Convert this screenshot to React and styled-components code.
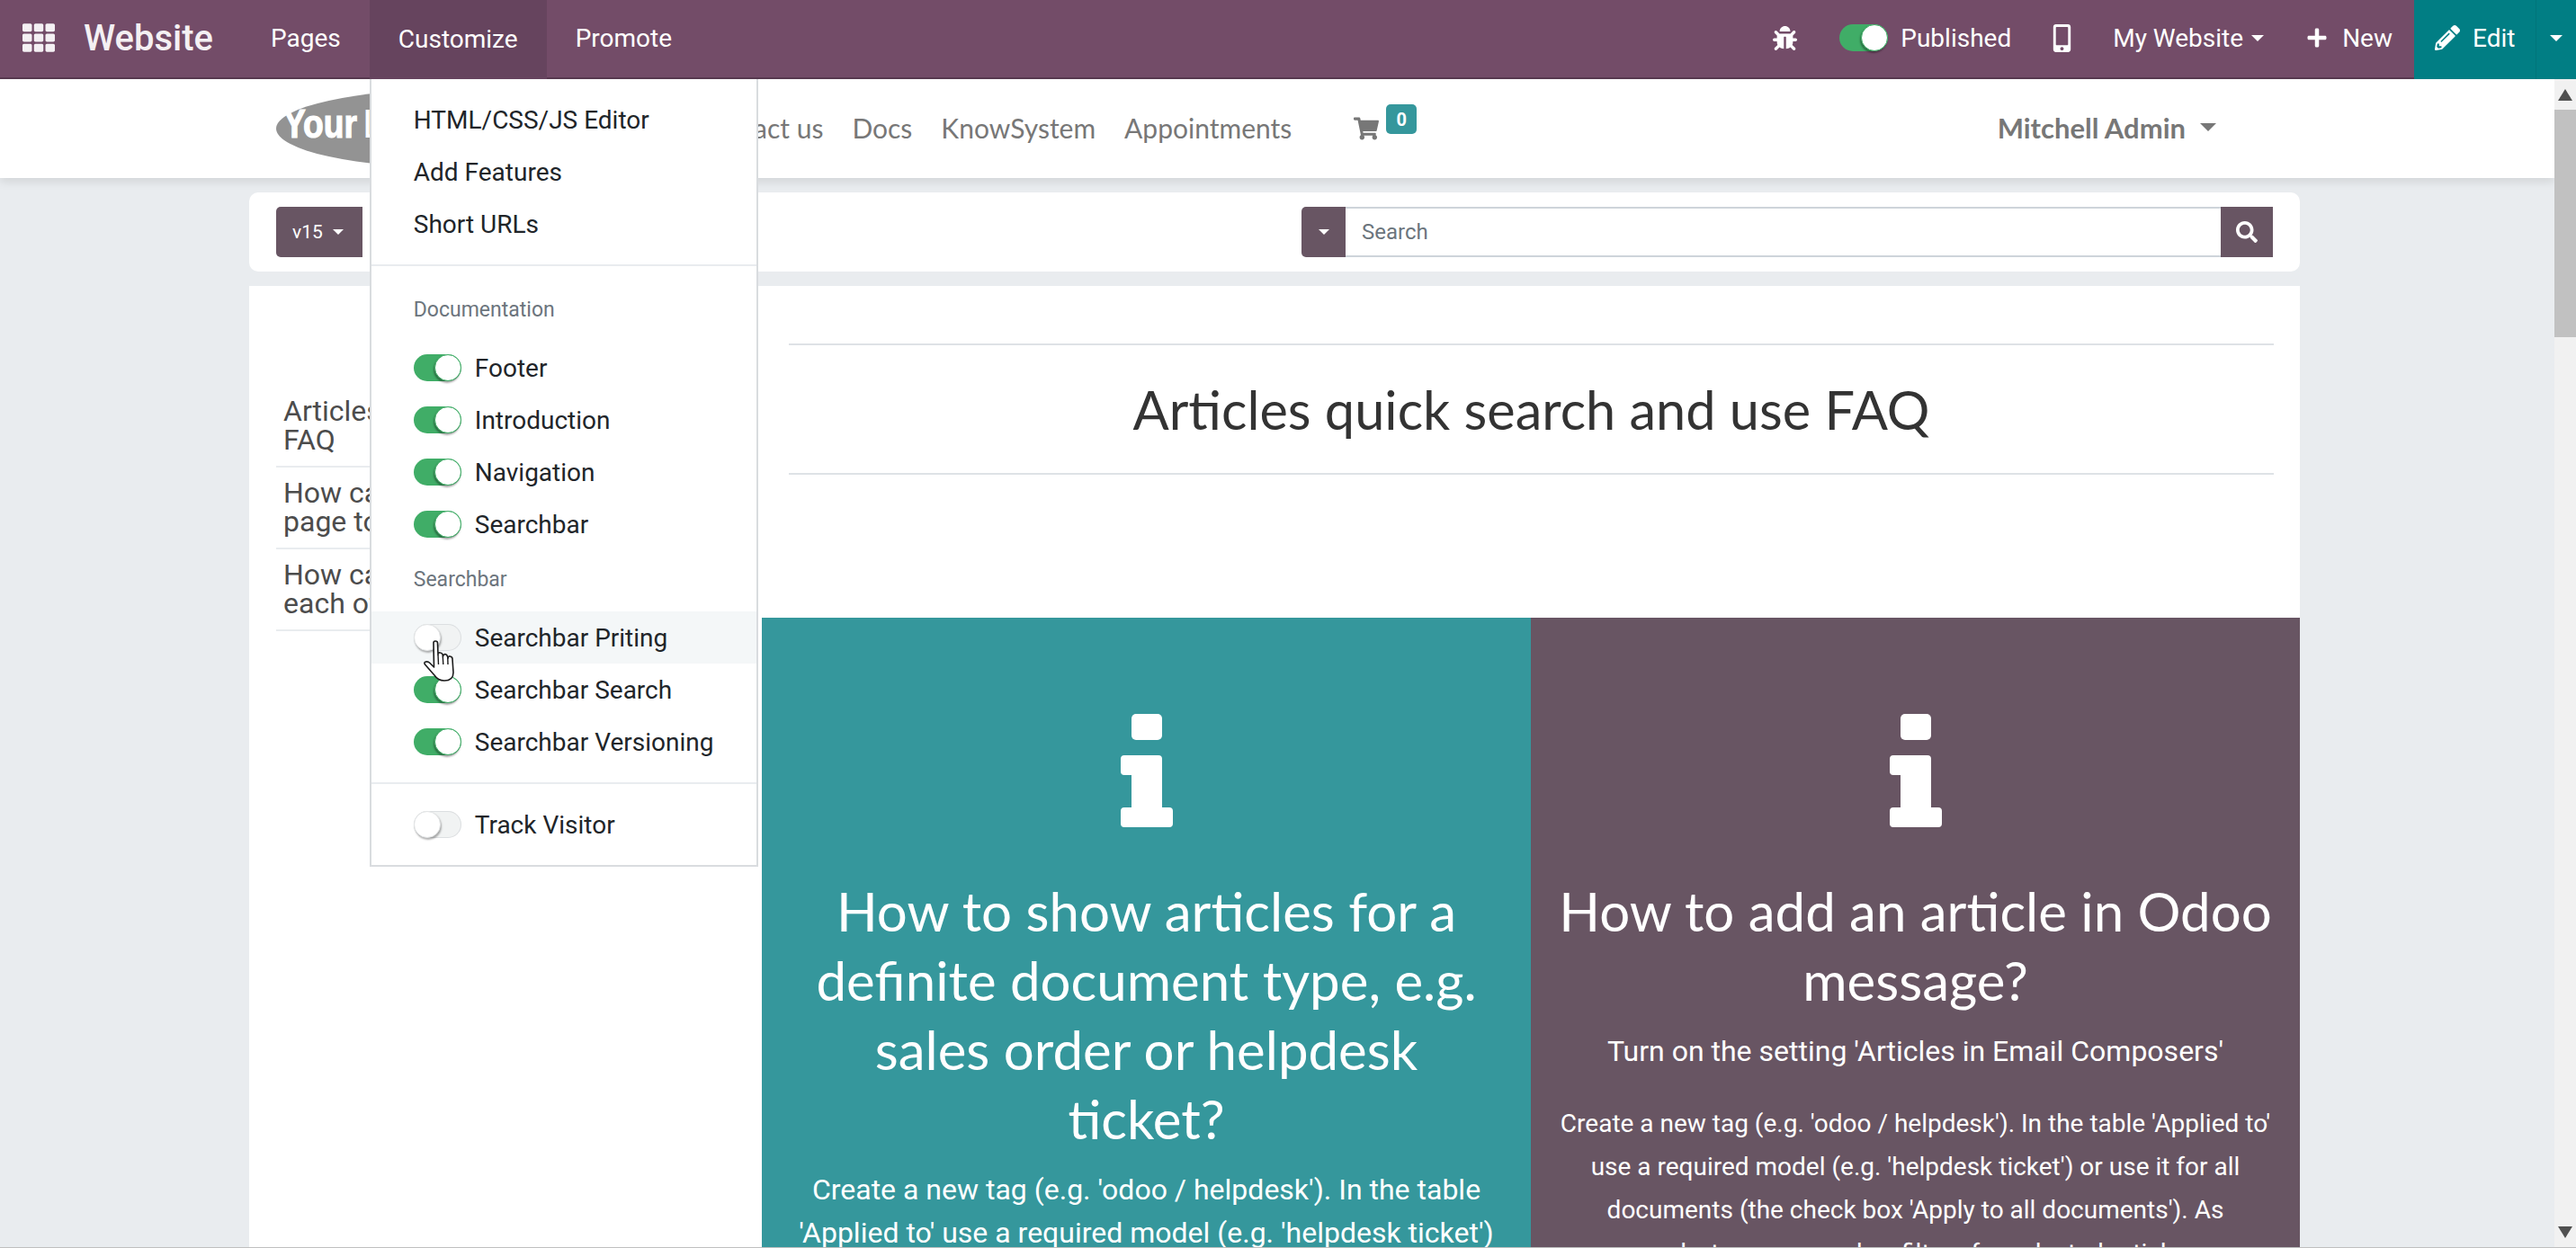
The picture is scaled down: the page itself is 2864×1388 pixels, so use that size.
import React from "react"
import styled, { createGlobalStyle } from "styled-components"
import { FaBug, FaMobileAlt, FaPlus, FaPencilAlt, FaSearch, FaShoppingCart, FaTh } from "react-icons/fa"

const GlobalStyle = createGlobalStyle`
  html, body { margin: 0; padding: 0; height: 100%; overflow: hidden; }
  body { font-family: Roboto, sans-serif; }
  * { box-sizing: border-box; }
`
const HEADING_FONT = `Lato, "Noto Sans", sans-serif`

const Page = styled.div`
  height: 100vh;
  display: flex;
  flex-direction: column;
  overflow: hidden;
  border-bottom: 1px solid rgba(0, 0, 0, 0.25);
`
const NavBar = styled.header`
  flex: none;
  height: 88px;
  display: flex;
  align-items: stretch;
  background: #734c68;
  border-bottom: 2px solid #57394f;
  color: #fff;
  position: relative;
  z-index: 10;
`
const AppIcon = styled.div`
  width: 93px;
  display: flex;
  align-items: center;
  padding: 0 0 2px 25px;
  font-size: 36px;
  color: #f4f0f3;
`
const Brand = styled.div`
  width: 176px;
  display: flex;
  align-items: center;
  padding-bottom: 2px;
  font-size: 40px;
  font-weight: 500;
  color: #f4f0f3;
`
const NavItem = styled.div`
  position: relative;
  display: flex;
  align-items: center;
  padding: 0 32px 2px;
  font-size: 28px;
  background: ${(p) => (p.$active ? "#66445e" : "transparent")};
  margin-bottom: ${(p) => (p.$active ? "-2px" : "0")};
`
const Spacer = styled.div`
  flex: 1;
`
const RightGroup = styled.div`
  display: flex;
  align-items: center;
  padding-bottom: 2px;
  font-size: 28px;
`
const Caret = styled.span`
  display: inline-block;
  width: 0;
  height: 0;
  border-left: ${(p) => p.$size || 7}px solid transparent;
  border-right: ${(p) => p.$size || 7}px solid transparent;
  border-top: ${(p) => p.$size || 7}px solid ${(p) => p.$color || "#fff"};
  margin-left: ${(p) => p.$gap ?? 9}px;
`
const BugSlot = styled.div`
  display: flex;
  font-size: 27px;
  margin-right: 47px;
`
const SwitchLabel = styled.div`
  display: flex;
  align-items: center;
  gap: 14px;
  margin-right: 41px;
`
const MobileSlot = styled.div`
  display: flex;
  font-size: 31px;
  margin-right: 41px;
`
const PlainItem = styled.div`
  display: flex;
  align-items: center;
  margin-right: ${(p) => p.$mr || 0}px;
`
const PlusIcon = styled(FaPlus)`
  font-size: 24px;
  margin-right: 16px;
`
const EditBlock = styled.div`
  width: 180px;
  margin-left: 24px;
  margin-bottom: -2px;
  display: flex;
  background: #017e84;
  font-size: 28px;
`
const EditMain = styled.div`
  width: 135px;
  display: flex;
  align-items: center;
  gap: 14px;
  padding: 0 0 4px 23px;
`
const EditCaret = styled.div`
  flex: 1;
  display: flex;
  align-items: center;
  justify-content: center;
  padding-bottom: 4px;
  border-left: 1px solid #01757a;
`

/* customize dropdown */
const Menu = styled.div`
  position: absolute;
  top: 100%;
  left: 0;
  width: 432px;
  background: #fff;
  border: 2px solid #d9dcdf;
  border-top: 0;
  padding: 17px 0 16px;
  color: #212529;
  z-index: 20;
`
const MenuLink = styled.div`
  height: 58px;
  line-height: 58px;
  padding-left: 47px;
  font-size: 28px;
`
const MenuDivider = styled.div`
  height: 2px;
  background: #e9ecef;
  margin: ${(p) => p.$top ?? 16}px 0 16px;
`
const MenuHeader = styled.div`
  height: 58px;
  line-height: 58px;
  margin: ${(p) => p.$top ?? 4}px 0 6px;
  padding-left: 47px;
  font-size: 23px;
  color: #6c757d;
`
const ToggleRow = styled.div`
  position: relative;
  height: 58px;
  display: flex;
  align-items: center;
  gap: 15px;
  padding-left: 47px;
  font-size: 28px;
  background: ${(p) => (p.$hover ? "#f4f7f8" : "transparent")};
`
const Track = styled.span`
  flex: none;
  position: relative;
  display: inline-block;
  width: ${(p) => p.$w || 53}px;
  height: 30px;
  border-radius: 15px;
  background: ${(p) => (p.$on ? "#40ad67" : "#f1f3f3")};
  box-shadow: ${(p) => (p.$on ? "none" : "inset 0 0 0 1px #dcdfe1")};
`
const Knob = styled.span`
  position: absolute;
  top: 0;
  ${(p) => (p.$on ? "right: 0;" : "left: 0;")}
  width: 30px;
  height: 30px;
  border-radius: 50%;
  background: #fff;
  border: 1px solid ${(p) => (p.$on ? "#40ad67" : "#e3e5e6")};
  box-shadow: ${(p) => (p.$on ? "-1px 2px 2px rgba(0,0,0,.35)" : "1px 2px 2px rgba(0,0,0,.3)")};
`
const HandCursor = styled.svg`
  position: absolute;
  left: 58px;
  top: 32px;
  width: 34px;
  height: 46px;
  z-index: 2;
`

/* page */
const Body = styled.div`
  flex: 1;
  min-height: 0;
  display: flex;
`
const Main = styled.main`
  flex: 1;
  min-width: 0;
  overflow: hidden;
  background: #e9ecef;
`
const Scrollbar = styled.div`
  flex: none;
  width: 24px;
  display: flex;
  flex-direction: column;
  background: #f1f1f1;
`
const ScrollArrow = styled.div`
  flex: none;
  height: 34px;
  display: flex;
  align-items: center;
  justify-content: center;
`
const ArrowUp = styled.span`
  width: 0;
  height: 0;
  border-left: 8px solid transparent;
  border-right: 8px solid transparent;
  border-bottom: 13px solid #505050;
`
const ArrowDown = styled.span`
  width: 0;
  height: 0;
  border-left: 8px solid transparent;
  border-right: 8px solid transparent;
  border-top: 13px solid #505050;
`
const ScrollThumb = styled.div`
  flex: none;
  height: 253px;
  background: #c1c1c1;
`
const ScrollRest = styled.div`
  flex: 1;
`
const SiteHeader = styled.div`
  height: 110px;
  display: flex;
  align-items: center;
  background: #fff;
  box-shadow: 0 4px 10px rgba(0, 0, 0, 0.1);
  padding-left: 307px;
  position: relative;
`
const Logo = styled.svg`
  flex: none;
  width: 240px;
  height: 80px;
`
const SiteNav = styled.nav`
  display: flex;
  align-items: center;
  gap: 32px;
  font-family: ${HEADING_FONT};
  font-size: 30px;
  color: #777;
  margin: -3px 0 0 227px;
`
const SiteLink = styled.span`
  white-space: nowrap;
`
const CartLink = styled.span`
  position: relative;
  display: flex;
  align-items: center;
  font-size: 28px;
  color: #777;
  margin-left: 69px;
`
const CartBadge = styled.span`
  position: absolute;
  left: 36px;
  top: -13px;
  width: 34px;
  height: 33px;
  border-radius: 5px;
  background: #35979c;
  color: #fff;
  font-family: Roboto, sans-serif;
  font-size: 20px;
  font-weight: 700;
  display: flex;
  align-items: center;
  justify-content: center;
`
const UserMenu = styled.div`
  position: absolute;
  right: 376px;
  top: -3px;
  bottom: 0;
  display: flex;
  align-items: center;
  font-family: ${HEADING_FONT};
  font-size: 31px;
  font-weight: 700;
  color: #777;
`
const Wrapper = styled.div`
  width: 2280px;
  margin-left: 277px;
`
const SearchCard = styled.div`
  margin-top: 16px;
  height: 88px;
  display: flex;
  align-items: center;
  justify-content: space-between;
  padding: 0 30px;
  background: #fff;
  border-radius: 10px;
`
const VersionButton = styled.div`
  width: 96px;
  height: 56px;
  display: flex;
  align-items: center;
  padding-left: 18px;
  border-radius: 5px 0 0 5px;
  background: #685563;
  color: #fff;
  font-size: 21px;
`
const SearchGroup = styled.div`
  width: 1080px;
  height: 56px;
  display: flex;
`
const FilterButton = styled.div`
  flex: none;
  width: 49px;
  display: flex;
  align-items: center;
  justify-content: center;
  background: #685563;
  border-radius: 5px 0 0 5px;
`
const SearchInput = styled.div`
  flex: 1;
  display: flex;
  align-items: center;
  padding-left: 18px;
  border: 2px solid #ced4da;
  border-left: 0;
  border-right: 0;
  font-size: 24px;
  color: #6c757d;
`
const SearchButton = styled.div`
  flex: none;
  width: 58px;
  display: flex;
  align-items: center;
  justify-content: center;
  background: #685563;
  color: #fff;
  font-size: 24px;
`
const ArticleCard = styled.div`
  margin-top: 16px;
  display: grid;
  grid-template-columns: 570px 1710px;
  background: #fff;
`
const Sidebar = styled.aside`
  padding: 111px 40px 0 30px;
`
const SideRow = styled.div`
  padding: 12px 8px 13px;
  font-size: 32px;
  line-height: 32px;
  color: #4c4c4c;
  border-bottom: 2px solid #e9ecef;
`
const Content = styled.div`
  padding-top: 64px;
`
const TitleBlock = styled.h1`
  margin: 0 29px 159px 30px;
  height: 146px;
  display: flex;
  align-items: center;
  justify-content: center;
  border-top: 2px solid #dee2e6;
  border-bottom: 2px solid #dee2e6;
  font-family: ${HEADING_FONT};
  font-size: 59.5px;
  font-weight: 400;
  color: #333;
`
const CardGrid = styled.div`
  display: grid;
  grid-template-columns: 855px 855px;
`
const InfoCard = styled.section`
  height: 900px;
  padding: 107px 30px 0;
  background: ${(p) => p.$bg};
  color: #fff;
  text-align: center;
`
const InfoIcon = styled.svg`
  display: block;
  width: 58px;
  height: 126px;
  margin: 0 auto 55px;
`
const CardTitle = styled.h2`
  margin: 0 0 16px;
  font-family: ${HEADING_FONT};
  font-size: 60px;
  line-height: 77px;
  font-weight: 400;
`
const CardSub = styled.p`
  margin: 0 0 33px;
  font-size: 32px;
  line-height: 48px;
`
const CardText = styled.p`
  margin: 0;
  font-size: 28px;
  line-height: 48px;
`

const Toggle = ({ on, w }) => (
  <Track $on={on} $w={w}>
    <Knob $on={on} />
  </Track>
)

const Info = () => (
  <InfoIcon viewBox="0 0 58 126">
    <rect x="12" y="0" width="34" height="29" rx="5" fill="#fff" />
    <path
      d="M4 46H42Q46 46 46 50V104H54Q58 104 58 108V122Q58 126 54 126H4Q0 126 0 122V108Q0 104 4 104H12V68H4Q0 68 0 64V50Q0 46 4 46Z"
      fill="#fff"
    />
  </InfoIcon>
)

const Hand = () => (
  <HandCursor viewBox="0 0 34 46">
    <path
      d="M11 3Q11 1 13 1Q15.5 1 15.5 3L16 16Q16 13.5 18.5 14Q20.5 14 21 16L21.5 18Q22 15.5 24 15.5Q26 16 26.5 18L27 20Q27.5 17.5 29.5 18Q32 18.5 32 21L33 36Q33 45 23 45Q16 45 12 39L1.5 27Q0 24.5 2.5 24Q5 23.5 7 25.5L11.5 30Z"
      fill="#fff"
      stroke="#1c1c1c"
      strokeWidth="1.6"
      strokeLinejoin="round"
    />
    <path d="M16 16L16.5 27M21.3 18L21.8 27M26.8 20L27 27" stroke="#1c1c1c" strokeWidth="1.4" fill="none" />
  </HandCursor>
)

export default function App() {
  return (
    <Page>
      <GlobalStyle />
      <NavBar>
        <AppIcon>
          <FaTh />
        </AppIcon>
        <Brand>Website</Brand>
        <NavItem>Pages</NavItem>
        <NavItem $active>
          Customize
          <Menu>
            <MenuLink>HTML/CSS/JS Editor</MenuLink>
            <MenuLink>Add Features</MenuLink>
            <MenuLink>Short URLs</MenuLink>
            <MenuDivider $top={15} />
            <MenuHeader $top={20}>Documentation</MenuHeader>
            <ToggleRow><Toggle on />Footer</ToggleRow>
            <ToggleRow><Toggle on />Introduction</ToggleRow>
            <ToggleRow><Toggle on />Navigation</ToggleRow>
            <ToggleRow><Toggle on />Searchbar</ToggleRow>
            <MenuHeader>Searchbar</MenuHeader>
            <ToggleRow $hover>
              <Toggle />
              Searchbar Priting
              <Hand />
            </ToggleRow>
            <ToggleRow><Toggle on />Searchbar Search</ToggleRow>
            <ToggleRow><Toggle on />Searchbar Versioning</ToggleRow>
            <MenuDivider />
            <ToggleRow><Toggle />Track Visitor</ToggleRow>
          </Menu>
        </NavItem>
        <NavItem>Promote</NavItem>
        <Spacer />
        <RightGroup>
          <BugSlot><FaBug /></BugSlot>
          <SwitchLabel>
            <Toggle on w={54} />
            Published
          </SwitchLabel>
          <MobileSlot><FaMobileAlt /></MobileSlot>
          <PlainItem $mr={47}>
            My Website
            <Caret />
          </PlainItem>
          <PlainItem>
            <PlusIcon />
            New
          </PlainItem>
        </RightGroup>
        <EditBlock>
          <EditMain>
            <FaPencilAlt />
            Edit
          </EditMain>
          <EditCaret><Caret $gap={0} /></EditCaret>
        </EditBlock>
      </NavBar>
      <Body>
        <Main>
          <SiteHeader>
            <Logo viewBox="0 0 240 80">
              <ellipse cx="200" cy="40" rx="200" ry="44" fill="#939393" />
              <text
                x="8"
                y="50"
                fontFamily="Liberation Sans, sans-serif"
                fontWeight="700"
                fontSize="44"
                fill="#fff"
                stroke="#fff"
                strokeWidth="1.2"
                textLength="82"
                lengthAdjust="spacingAndGlyphs"
              >
                Your
              </text>
              <text x="96" y="50" fontFamily="Liberation Sans, sans-serif" fontSize="44" fill="#fff">Logo</text>
            </Logo>
            <SiteNav>
              <SiteLink>Contact us</SiteLink>
              <SiteLink>Docs</SiteLink>
              <SiteLink>KnowSystem</SiteLink>
              <SiteLink>Appointments</SiteLink>
            </SiteNav>
            <CartLink>
              <FaShoppingCart />
              <CartBadge>0</CartBadge>
            </CartLink>
            <UserMenu>
              Mitchell Admin
              <Caret $size={9} $color="#777" $gap={16} />
            </UserMenu>
          </SiteHeader>
          <Wrapper>
            <SearchCard>
              <VersionButton>
                v15
                <Caret $size={6} $gap={11} />
              </VersionButton>
              <SearchGroup>
                <FilterButton><Caret $size={6} $gap={0} /></FilterButton>
                <SearchInput>Search</SearchInput>
                <SearchButton><FaSearch /></SearchButton>
              </SearchGroup>
            </SearchCard>
            <ArticleCard>
              <Sidebar>
                <SideRow>Articles<br />FAQ</SideRow>
                <SideRow>How can<br />page to</SideRow>
                <SideRow>How can<br />each of</SideRow>
              </Sidebar>
              <Content>
                <TitleBlock>Articles quick search and use FAQ</TitleBlock>
                <CardGrid>
                  <InfoCard $bg="#35979c">
                    <Info />
                    <CardTitle>How to show articles for a definite document type, e.g. sales order or helpdesk<br />ticket?</CardTitle>
                    <CardSub>Create a new tag (e.g. 'odoo / helpdesk'). In the table 'Applied to' use a required model (e.g. 'helpdesk ticket')</CardSub>
                  </InfoCard>
                  <InfoCard $bg="#685563">
                    <Info />
                    <CardTitle>How to add an article in Odoo message?</CardTitle>
                    <CardSub>Turn on the setting 'Articles in Email Composers'</CardSub>
                    <CardText>Create a new tag (e.g. 'odoo / helpdesk'). In the table 'Applied to' use a required model (e.g. 'helpdesk ticket') or use it for all documents (the check box 'Apply to all documents'). As<br />a rule, tags are used as filters for selected articles</CardText>
                  </InfoCard>
                </CardGrid>
              </Content>
            </ArticleCard>
          </Wrapper>
        </Main>
        <Scrollbar>
          <ScrollArrow><ArrowUp /></ScrollArrow>
          <ScrollThumb />
          <ScrollRest />
          <ScrollArrow><ArrowDown /></ScrollArrow>
        </Scrollbar>
      </Body>
    </Page>
  )
}
